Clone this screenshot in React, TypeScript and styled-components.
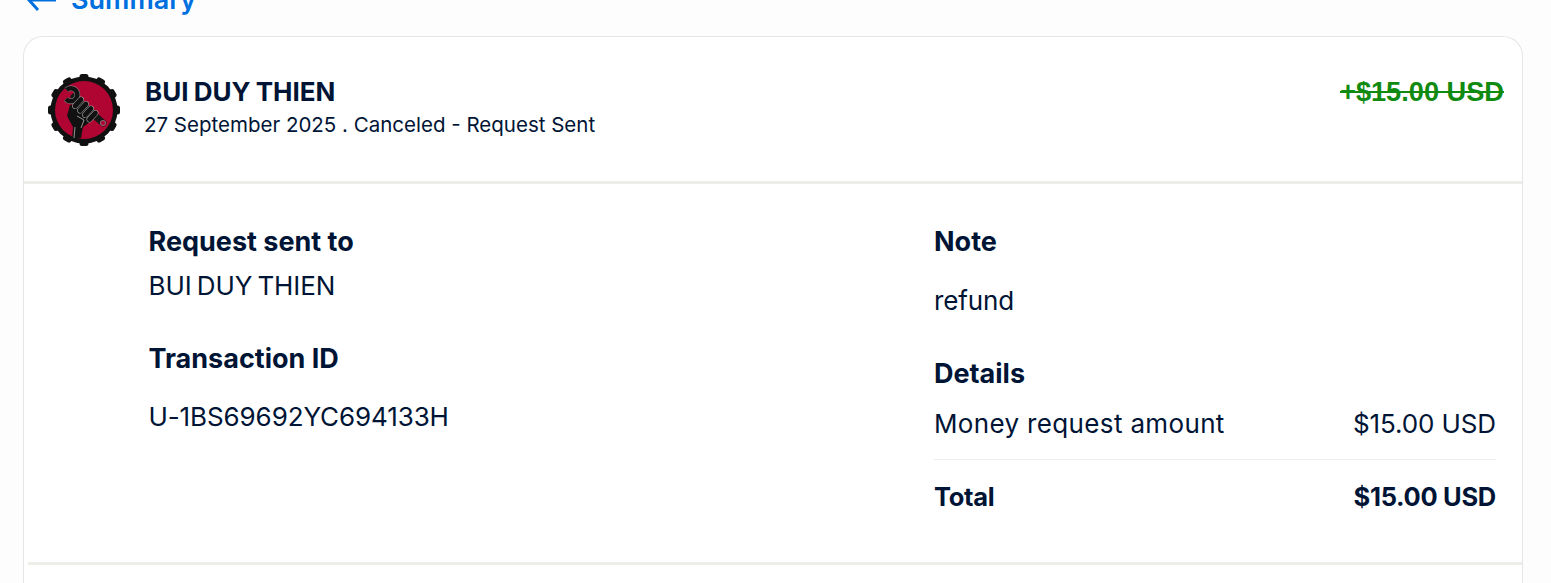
import React from 'react';
import styled, { createGlobalStyle } from 'styled-components';

const GlobalStyle = createGlobalStyle`
  html, body {
    margin: 0;
    padding: 0;
    height: 583px;
    overflow: hidden;
    background: #fdfdfd;
    font-family: Inter, "Liberation Sans", sans-serif;
    color: #001435;
  }
`;

const Page = styled.div`
  padding: 0 28px 0 23px;
  margin-top: -14px;
`;

const BackLink = styled.a`
  display: flex;
  align-items: center;
  gap: 15px;
  height: 28px;
  margin: 0 0 22px 3px;
  color: #0070e0;
  font-size: 27px;
  font-weight: 600;
  line-height: 28px;
`;

const Card = styled.div`
  background: #fff;
  border: 1px solid #e6e6e6;
  border-bottom: 0;
  border-radius: 20px 20px 0 0;
  height: 560px;
`;

const Header = styled.div`
  display: flex;
  align-items: flex-start;
  height: 144px;
  padding: 0 18px 0 23px;
  border-bottom: 3px solid #eeede8;
`;

const Avatar = styled.svg`
  width: 74px;
  height: 74px;
  margin-top: 35px;
  flex: none;
`;

const Who = styled.div`
  margin: 38px 0 0 23px;
  flex: 1;
`;

const Name = styled.div`
  font-size: 26px;
  font-weight: 700;
  line-height: 34px;
  margin-left: 1px;
  word-spacing: -1px;
`;

const Sub = styled.div`
  font-size: 20.5px;
  line-height: 28px;
  margin-top: 2px;
`;

const Amount = styled.div`
  margin-top: 38px;
  color: #118a11;
  font-family: "Liberation Sans", Arial, sans-serif;
  font-size: 27.2px;
  font-weight: 700;
  line-height: 34px;
  text-decoration: line-through;
`;

const Body = styled.div`
  display: grid;
  grid-template-columns: 785.5px 562px;
  padding: 41px 0 0 124.5px;
  height: 378px;
  box-sizing: border-box;
`;

const Column = styled.div`
  display: flex;
  flex-direction: column;
`;

const Label = styled.div<{ $top?: number }>`
  font-size: 27px;
  font-weight: 700;
  line-height: 34px;
  margin-top: ${(p) => p.$top ?? 0}px;
`;

const Value = styled.div<{ $top?: number; $caps?: boolean }>`
  font-size: 26px;
  line-height: 34px;
  margin-top: ${(p) => p.$top ?? 0}px;
  letter-spacing: -0.1px;
  ${(p) => p.$caps && 'word-spacing: -2px;'}
`;

const AmountRow = styled.div`
  display: flex;
  justify-content: space-between;
  margin-top: 16px;
  padding-bottom: 18px;
  border-bottom: 1px solid #eeede8;
  font-size: 26px;
  line-height: 34px;
`;

const RowLabel = styled.span`
  letter-spacing: 0.35px;
`;

const RowPrice = styled.span`
  letter-spacing: -0.1px;
`;

const TotalRow = styled.div`
  display: flex;
  justify-content: space-between;
  margin-top: 20px;
  font-size: 25.5px;
  font-weight: 700;
  line-height: 34px;
  letter-spacing: -0.3px;
`;

const Footer = styled.div`
  height: 3px;
  margin-left: 4px;
  background: #eeede8;
`;

const fingers = [
  [32, 30],
  [37, 34.5],
  [42, 39],
  [46.5, 43.5],
];

const Logo = () => (
  <Avatar viewBox="0 0 74 74">
    <circle cx="37" cy="38" r="33.500" fill="#111" />
    {Array.from({ length: 12 }).map((_, i) => (
      <rect key={i} x="32.500" y="2" width="9" height="6" rx="2.500" fill="#111" transform={`rotate(${i * 30} 37 38)`} />
    ))}
    <circle cx="37" cy="38" r="29" fill="#b00532" />
    {/* wrench */}
    <path d="M27 25 56 51" stroke="#161616" strokeWidth="7" strokeLinecap="round" />
    <circle cx="56" cy="51" r="2.600" fill="#b00532" stroke="#999" strokeWidth="0.7" />
    <path d="M19.500 18A6.500 6.500 0 1 1 19 27" fill="none" stroke="#999" strokeWidth="5.600" />
    <path d="M19.500 18A6.500 6.500 0 1 1 19 27" fill="none" stroke="#111" strokeWidth="4.600" />
    {/* fist */}
    <path d="M23 33 35 31 46 48 36 55 34 66 25 68 26 55 20 44Z" fill="#111" />
    {fingers.map(([x, y]) => (
      <g key={x}>
        <path d={`M${x + 2} ${y - 2.500}L${x - 4} ${y + 4}`} stroke="#aaa" strokeWidth="5.800" strokeLinecap="round" />
        <path d={`M${x + 2} ${y - 2.500}L${x - 4} ${y + 4}`} stroke="#111" strokeWidth="4.800" strokeLinecap="round" />
      </g>
    ))}
    <path d="M34 56 37 48 30 44M27 66 28 55" fill="none" stroke="#b5b5b5" strokeWidth="0.8" />
  </Avatar>
);

const App = () => (
  <>
    <GlobalStyle />
    <Page>
      <BackLink>
        <svg width="30" height="24" viewBox="0 0 30 24" fill="none" stroke="#0070e0" strokeWidth="3">
          <path d="M30 12H3" />
          <path d="M12 2 3 12l9 10" />
        </svg>
        Summary
      </BackLink>
      <Card>
        <Header>
          <Logo />
          <Who>
            <Name>BUI DUY THIEN</Name>
            <Sub>27 September 2025 . Canceled - Request Sent</Sub>
          </Who>
          <Amount>+$15.00 USD</Amount>
        </Header>
        <Body>
          <Column>
            <Label>Request sent to</Label>
            <Value $top={10} $caps>BUI DUY THIEN</Value>
            <Label $top={39}>Transaction ID</Label>
            <Value $top={24}>U-1BS69692YC694133H</Value>
          </Column>
          <Column>
            <Label>Note</Label>
            <Value $top={25}>refund</Value>
            <Label $top={39}>Details</Label>
            <AmountRow>
              <RowLabel>Money request amount</RowLabel>
              <RowPrice>$15.00 USD</RowPrice>
            </AmountRow>
            <TotalRow>
              <span>Total</span>
              <span>$15.00 USD</span>
            </TotalRow>
          </Column>
        </Body>
        <Footer />
      </Card>
    </Page>
  </>
);

export default App;
